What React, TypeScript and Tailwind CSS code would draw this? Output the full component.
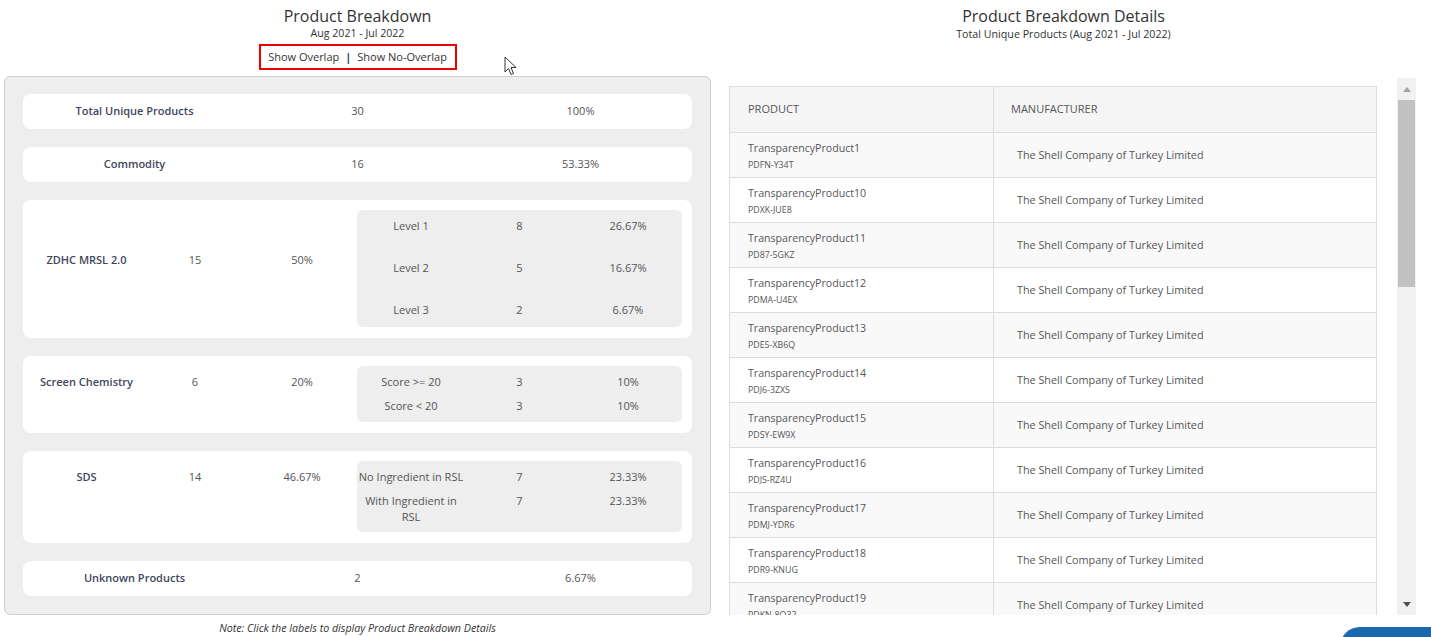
import React from "react";

const F = { fontFamily: '"Open Sans", "Liberation Sans", sans-serif' };

type Sub = { label: React.ReactNode; n: string; p: string };

function SimpleCard({ label, n, p }: { label: string; n: string; p: string }) {
  return (
    <div className="grid h-[35px] grid-cols-3 items-center rounded-lg bg-white text-[11px]">
      <div className="text-center font-semibold text-[#41465b]">{label}</div>
      <div className="text-center text-[#555]">{n}</div>
      <div className="text-center text-[#555]">{p}</div>
    </div>
  );
}

function NestedCard({
  label,
  n,
  p,
  subs,
  h,
  pt,
  gap,
}: {
  label: string;
  n: string;
  p: string;
  subs: Sub[];
  h: string;
  pt: string;
  gap: string;
}) {
  return (
    <div className={`flex rounded-lg bg-white text-[11px] ${h}`}>
      <div className={`flex h-fit leading-4 ${pt}`}>
        <div className="w-[127px] text-center font-semibold text-[#41465b]">{label}</div>
        <div className="w-[90px] text-center text-[#555]">{n}</div>
        <div className="w-[117px] pl-[7px] text-center text-[#555]">{p}</div>
      </div>
      <div className={`my-[10px] mb-[11px] flex w-[325px] flex-col rounded-md bg-[#eeeeee] py-2 ${gap}`}>
        {subs.map((s, i) => (
          <div key={i} className="grid grid-cols-[108px_109px_108px] leading-4 text-[#555]">
            <div className="whitespace-nowrap text-center">{s.label}</div>
            <div className="text-center">{s.n}</div>
            <div className="text-center">{s.p}</div>
          </div>
        ))}
      </div>
    </div>
  );
}

const rows = [
  ["TransparencyProduct1", "PDFN-Y34T"],
  ["TransparencyProduct10", "PDXK-JUE8"],
  ["TransparencyProduct11", "PD87-5GKZ"],
  ["TransparencyProduct12", "PDMA-U4EX"],
  ["TransparencyProduct13", "PDE5-XB6Q"],
  ["TransparencyProduct14", "PDJ6-3ZXS"],
  ["TransparencyProduct15", "PDSY-EW9X"],
  ["TransparencyProduct16", "PDJS-RZ4U"],
  ["TransparencyProduct17", "PDMJ-YDR6"],
  ["TransparencyProduct18", "PDR9-KNUG"],
  ["TransparencyProduct19", "PDKN-8O32"],
  ["TransparencyProduct2", "PDQW-7H2L"],
];

export default function App() {
  return (
    <div className="relative h-[637px] w-[1431px] overflow-hidden bg-white" style={F}>
      <div className="flex">
        {/* Left column */}
        <div className="ml-[4px] flex w-[707px] flex-col items-center">
          <div className="pt-[6px] text-[16px] leading-5 text-[#333]">Product Breakdown</div>
          <div className="text-[10.6px] leading-[14px] text-[#333]">Aug 2021 - Jul 2022</div>
          <div className="mt-[4px] flex h-[26px] w-[198px] items-center justify-center border-2 border-[#ee0000] text-[11px] text-[#333]">
            <span>Show Overlap</span>
            <span className="mx-[6px] font-bold text-[#1f3b73]">|</span>
            <span>Show No-Overlap</span>
          </div>
          <div className="mt-[6px] flex w-full flex-col gap-[18px] rounded-md border border-[#cfcfcf] bg-[#eeeeee] px-[18px] pb-[18px] pt-[17px]">
            <SimpleCard label="Total Unique Products" n="30" p="100%" />
            <SimpleCard label="Commodity" n="16" p="53.33%" />
            <NestedCard
              label="ZDHC MRSL 2.0"
              n="15"
              p="50%"
              h="h-[138px]"
              pt="pt-[52px]"
              gap="gap-[26px]"
              subs={[
                { label: "Level 1", n: "8", p: "26.67%" },
                { label: "Level 2", n: "5", p: "16.67%" },
                { label: "Level 3", n: "2", p: "6.67%" },
              ]}
            />
            <NestedCard
              label="Screen Chemistry"
              n="6"
              p="20%"
              h="h-[77px]"
              pt="pt-[18px]"
              gap="gap-2"
              subs={[
                { label: "Score >= 20", n: "3", p: "10%" },
                { label: "Score < 20", n: "3", p: "10%" },
              ]}
            />
            <NestedCard
              label="SDS"
              n="14"
              p="46.67%"
              h="h-[92px]"
              pt="pt-[18px]"
              gap="gap-2"
              subs={[
                { label: "No Ingredient in RSL", n: "7", p: "23.33%" },
                {
                  label: (
                    <>
                      With Ingredient in
                      <br />
                      RSL
                    </>
                  ),
                  n: "7",
                  p: "23.33%",
                },
              ]}
            />
            <SimpleCard label="Unknown Products" n="2" p="6.67%" />
          </div>
          <div className="mt-[6px] text-[10.7px] italic leading-[14px] text-[#333]">
            Note: Click the labels to display Product Breakdown Details
          </div>
        </div>

        {/* Right column */}
        <div className="flex w-[705px] flex-col items-center">
          <div className="pt-[6px] text-[16px] leading-5 text-[#333]">Product Breakdown Details</div>
          <div className="pt-[1px] text-[10.7px] leading-[14px] text-[#333]">
            Total Unique Products (Aug 2021 - Jul 2022)
          </div>
          <div className="mt-[37px] flex h-[537px] w-full">
            <div className="ml-[18px] mt-[8px] w-[648px] overflow-hidden">
              <div className="border border-[#dddddd] text-[10.8px] text-[#555]">
                <div className="flex h-[46px] border-b border-[#dddddd] bg-[#f5f5f5]">
                  <div className="flex w-[263px] items-center pl-[18px] text-[11px]">PRODUCT</div>
                  <div className="flex flex-1 items-center border-l border-[#dddddd] pl-[17px] text-[11px]">
                    MANUFACTURER
                  </div>
                </div>
                {rows.map(([name, code], i) => (
                  <div
                    key={code}
                    className={`flex h-[45px] border-b border-[#dddddd] ${i % 2 === 0 ? "bg-[#f9f9f9]" : "bg-white"}`}
                  >
                    <div className="flex w-[263px] flex-col pl-[18px] pt-[7px]">
                      <div className="text-[10.6px] leading-4 text-[#555]">{name}</div>
                      <div className="mt-[3px] text-[8.8px] leading-[12px] text-[#555]">{code}</div>
                    </div>
                    <div className="flex flex-1 items-center border-l border-[#dddddd] pl-[23px]">
                      The Shell Company of Turkey Limited
                    </div>
                  </div>
                ))}
              </div>
            </div>
            {/* scrollbar */}
            <div className="ml-[20px] flex w-[19px] flex-col bg-[#f1f1f1]">
              <div className="flex h-[22px] items-center justify-center">
                <svg width="8" height="5" viewBox="0 0 8 5">
                  <path d="M0 5 L4 0 L8 5 Z" fill="#a3a3a3" />
                </svg>
              </div>
              <div className="mx-[1px] h-[187px] bg-[#c1c1c1]" />
              <div className="flex-1" />
              <div className="flex h-[22px] items-center justify-center">
                <svg width="8" height="5" viewBox="0 0 8 5">
                  <path d="M0 0 L4 5 L8 0 Z" fill="#505050" />
                </svg>
              </div>
            </div>
          </div>
        </div>
      </div>

      {/* mouse cursor */}
      <svg className="absolute left-[504px] top-[56px]" width="13" height="20" viewBox="0 0 13 20">
        <path
          d="M1 1 L1 16 L4.5 12.5 L7 18.5 L9.5 17.5 L7 11.5 L12 11.5 Z"
          fill="#ffffff"
          stroke="#333"
          strokeWidth="1"
          strokeLinejoin="round"
        />
      </svg>

      {/* floating blue button (partially visible) */}
      <div className="absolute left-[1340px] top-[627px] h-[40px] w-[120px] rounded-full bg-[#1a68ad]" />
    </div>
  );
}
